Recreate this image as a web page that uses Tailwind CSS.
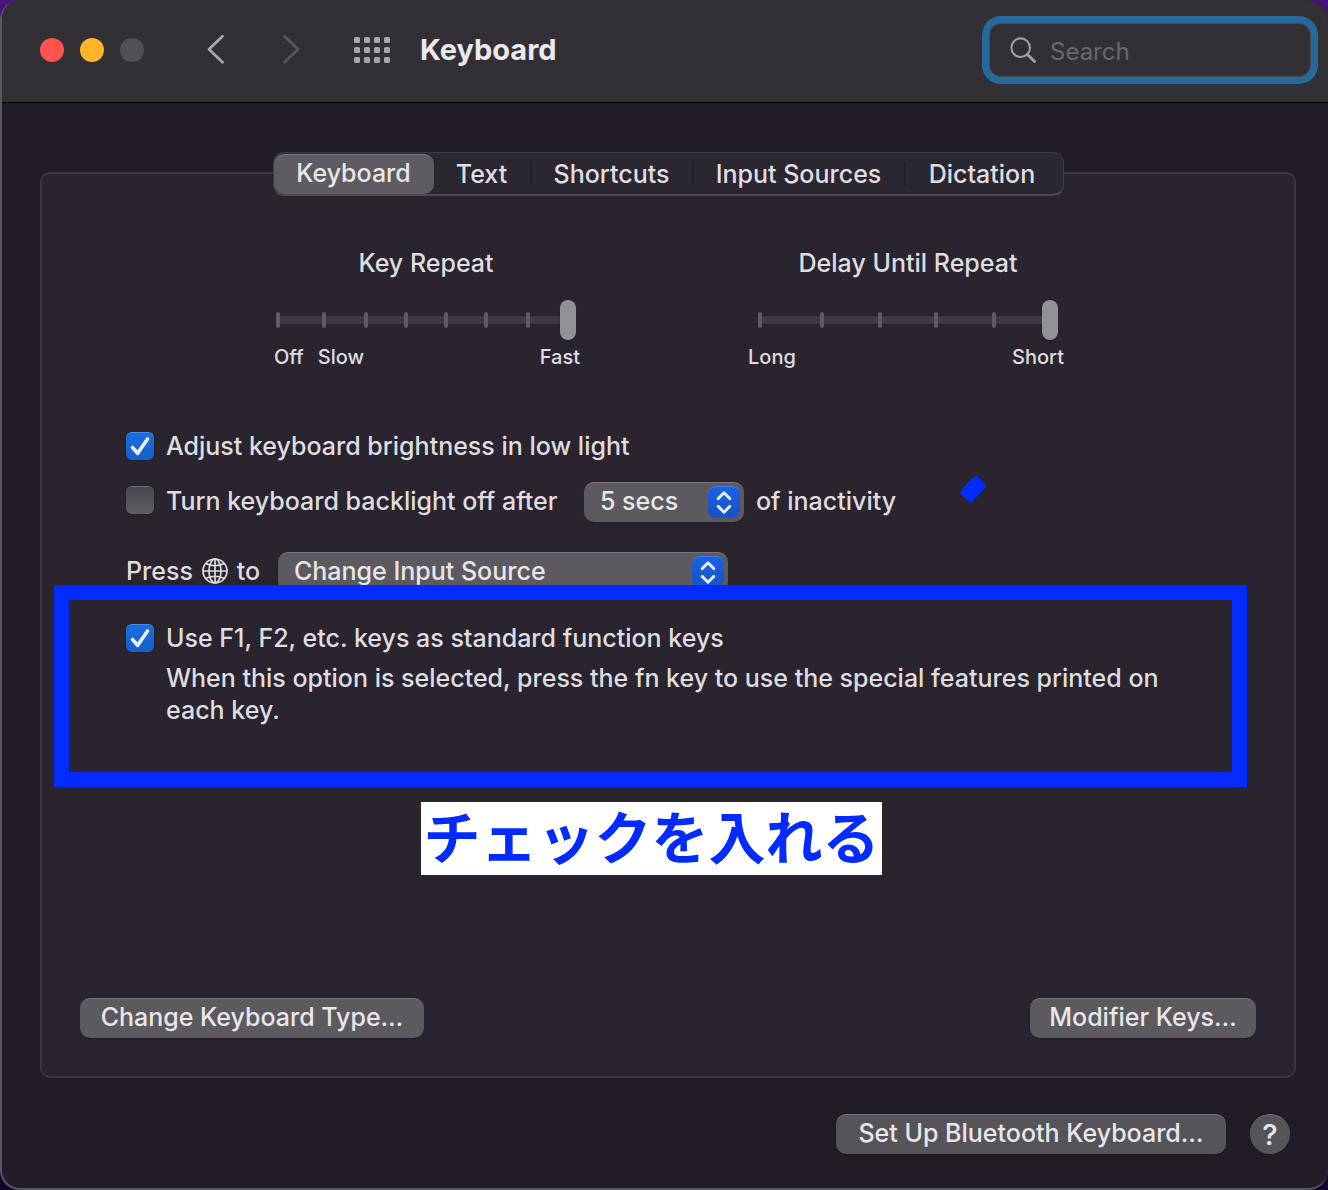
<!DOCTYPE html>
<html lang="en">
<head>
<meta charset="utf-8">
<meta name="viewport" content="width=device-width, initial-scale=1">
<title>Keyboard</title>
<script src="https://cdn.jsdelivr.net/npm/@tailwindcss/browser@4"></script>
</head>
<body class="min-h-screen bg-[linear-gradient(to_bottom,#4a1080,#1a0838_50%,#14062c)] font-['Inter','Noto_Sans_CJK_JP',sans-serif] text-[25px] font-medium leading-8 text-[#dfdde0]">
<div class="flex min-h-screen flex-col overflow-hidden rounded-[20px] border-b-2 border-l-2 border-[#59565c] bg-[#211c26]">

  <!-- Title bar -->
  <header class="flex h-[103px] items-center border-b border-black bg-[#323035] pb-0.5 pl-[38px] pr-[17px]">
    <div class="flex gap-4">
      <button aria-label="Close" class="size-6 rounded-full bg-[#ff544d]"></button>
      <button aria-label="Minimize" class="size-6 rounded-full bg-[#ffb429]"></button>
      <button aria-label="Zoom" disabled class="size-6 rounded-full bg-[#525056]"></button>
    </div>
    <nav class="ml-[58px] flex items-center gap-[46px]" aria-label="History">
      <button aria-label="Back"><svg class="size-7 overflow-visible" viewBox="0 0 28 28" fill="none" stroke="#a9a7ab" stroke-width="2.8" stroke-linecap="round" stroke-linejoin="round"><path d="M20.500 .300 7 13.300l13.500 13"/></svg></button>
      <button aria-label="Forward" disabled><svg class="size-7 overflow-visible" viewBox="0 0 28 28" fill="none" stroke="#57545a" stroke-width="2.8" stroke-linecap="round" stroke-linejoin="round"><path d="m8.500 .300 13.500 13-13.500 13"/></svg></button>
    </nav>
    <button aria-label="Show all" class="ml-[50px]">
      <svg class="h-[26px] w-9" viewBox="0 0 36 26" fill="#a8a6aa">
        <g id="dots"><rect width="6" height="6" rx="1.5"/><rect x="10" width="6" height="6" rx="1.5"/><rect x="20" width="6" height="6" rx="1.5"/><rect x="30" width="6" height="6" rx="1.5"/></g>
        <use href="#dots" y="10"/><use href="#dots" y="20"/>
      </svg>
    </button>
    <h1 class="ml-[30px] text-[29px] font-bold text-[#eae9eb]">Keyboard</h1>
    <label class="ml-auto flex h-[54px] w-[322px] items-center gap-3.5 rounded-xl border border-[#4b4950] bg-[#323035] pl-5 ring-[7px] ring-[#26699c]">
      <svg class="size-[26px] shrink-0" viewBox="0 0 28 28" fill="none" stroke="#a19fa3" stroke-width="2.2" stroke-linecap="round"><circle cx="11.500" cy="11.500" r="10"/><path d="m19 19 7.500 7.500" stroke-width="3"/></svg>
      <input type="search" aria-label="Search" placeholder="Search" class="w-full min-w-0 bg-transparent pt-1 text-[24px] font-normal outline-none placeholder:text-[#69666c]">
    </label>
  </header>

  <main class="flex flex-1 flex-col pb-[34px] pl-[38px] pr-8 pt-[69px]">
    <section class="relative flex flex-1 flex-col rounded-[10px] border-2 border-[#3a3740] bg-[#29242e]">

      <!-- Tabs sit across the pane's top edge -->
      <div role="tablist" class="-mt-[22px] flex h-11 items-center self-center rounded-[11px] border border-b-2 border-[#403c45] border-b-[#4c4851] bg-[#2b2730] text-[#e0dee1]">
        <button role="tab" aria-selected="true" class="h-10 w-40 rounded-[10px] border-t border-[#79767c] bg-[#5e5b61] pb-0.5 text-[#e8e7e9]">Keyboard</button>
        <button role="tab" class="h-6 w-[98px] border-r-2 border-[#242029] leading-[22px]">Text</button>
        <button role="tab" class="h-6 w-[162px] border-r-2 border-[#242029] leading-[22px]">Shortcuts</button>
        <button role="tab" class="h-6 w-[212px] border-r-2 border-[#242029] leading-[22px]">Input Sources</button>
        <button role="tab" class="h-6 w-[157px] pr-1 leading-[22px]">Dictation</button>
      </div>

      <!-- Repeat sliders -->
      <div class="mt-[51px] flex justify-center gap-[182px] pr-0.5">
        <div class="flex w-[300px] flex-col">
          <label for="rate" class="text-center">Key Repeat</label>
          <div class="mt-[21px] grid h-10 items-center">
            <div class="col-start-1 row-start-1 h-2 rounded-full bg-[#3c3942]"></div>
            <svg class="col-start-1 row-start-1 h-4 w-full" viewBox="0 0 300 16" stroke="#5e5b62" stroke-width="4" stroke-linecap="round"><path d="M2 2v12M48 2v12M90 2v12M130 2v12M170 2v12M210 2v12M252 2v12"/></svg>
            <input id="rate" type="range" min="0" max="7" value="7" class="col-start-1 row-start-1 h-10 w-full appearance-none bg-transparent [&::-webkit-slider-thumb]:h-10 [&::-webkit-slider-thumb]:w-4 [&::-webkit-slider-thumb]:appearance-none [&::-webkit-slider-thumb]:rounded-full [&::-webkit-slider-thumb]:bg-[#949196] [&::-webkit-slider-thumb]:shadow">
          </div>
          <div class="-mx-1 mt-[5px] flex gap-3.5 pl-0.5 text-[20px] leading-6"><span>Off</span><span>Slow</span><span class="ml-auto">Fast</span></div>
        </div>
        <div class="flex w-[300px] flex-col">
          <label for="delay" class="text-center">Delay Until Repeat</label>
          <div class="mt-[21px] grid h-10 items-center">
            <div class="col-start-1 row-start-1 h-2 rounded-full bg-[#3c3942]"></div>
            <svg class="col-start-1 row-start-1 h-4 w-full" viewBox="0 0 300 16" stroke="#5e5b62" stroke-width="4" stroke-linecap="round"><path d="M2 2v12M64 2v12M122 2v12M178 2v12M236 2v12"/></svg>
            <input id="delay" type="range" min="0" max="5" value="5" class="col-start-1 row-start-1 h-10 w-full appearance-none bg-transparent [&::-webkit-slider-thumb]:h-10 [&::-webkit-slider-thumb]:w-4 [&::-webkit-slider-thumb]:appearance-none [&::-webkit-slider-thumb]:rounded-full [&::-webkit-slider-thumb]:bg-[#949196] [&::-webkit-slider-thumb]:shadow">
          </div>
          <div class="-ml-3 -mr-2 mt-[5px] flex justify-between px-0.5 text-[20px] leading-6"><span>Long</span><span>Short</span></div>
        </div>
      </div>

      <!-- Options -->
      <div class="mt-[61px] flex flex-col px-[84px]">
        <div class="flex items-center gap-3">
          <span class="grid size-7 shrink-0">
            <input id="bright" type="checkbox" checked class="peer col-start-1 row-start-1 size-7 appearance-none rounded-md border-t border-[#6c696f] bg-linear-to-b from-[#4a474d] to-[#5f5c62] shadow checked:border-[#4b8ce8] checked:from-[#1b6de0] checked:to-[#155fc6]">
            <svg class="pointer-events-none invisible col-start-1 row-start-1 size-7 peer-checked:visible" viewBox="0 0 28 28" fill="none" stroke="#e9f0fb" stroke-width="3.600" stroke-linecap="round" stroke-linejoin="round"><path d="m6.500 15.500 5.200 5.800L21.500 7"/></svg>
          </span>
          <label for="bright">Adjust keyboard brightness in low light</label>
        </div>

        <div class="mt-5 flex items-center">
          <span class="mb-1 mr-3 grid size-7 shrink-0">
            <input id="backlight" type="checkbox" class="peer col-start-1 row-start-1 size-7 appearance-none rounded-md border-t border-[#6c696f] bg-linear-to-b from-[#4a474d] to-[#5f5c62] shadow checked:border-[#4b8ce8] checked:from-[#1b6de0] checked:to-[#155fc6]">
            <svg class="pointer-events-none invisible col-start-1 row-start-1 size-7 peer-checked:visible" viewBox="0 0 28 28" fill="none" stroke="#e9f0fb" stroke-width="3.600" stroke-linecap="round" stroke-linejoin="round"><path d="m6.500 15.500 5.200 5.800L21.500 7"/></svg>
          </span>
          <label for="backlight" class="w-[418px] pb-0.5">Turn keyboard backlight off after</label>
          <span class="grid items-center">
            <select aria-label="Backlight timeout" class="col-start-1 row-start-1 h-10 w-40 appearance-none rounded-[10px] border-t border-[#79767c] bg-[#5c595f] pb-1 pl-4 text-[#e8e7e9] shadow"><option>5 secs</option></select>
            <svg class="pointer-events-none col-start-1 row-start-1 mr-1 size-8 justify-self-end rounded-lg border-t border-[#3f7de8] bg-linear-to-b from-[#1a62e3] to-[#1553c6]" viewBox="0 0 32 32" fill="none" stroke="#e6edfa" stroke-width="3" stroke-linecap="round" stroke-linejoin="round"><path d="m10 12 6-6 6 6M10 20l6 6 6-6"/></svg>
          </span>
          <span class="ml-3 pb-0.5">of inactivity</span>
        </div>

        <div class="mt-[30px] flex items-center">
          <label for="globe" class="flex w-[152px] items-center gap-[9px] pb-0.5">Press
            <svg class="size-[26px]" viewBox="0 0 26 26" fill="none" stroke="#dfdde0" stroke-width="1.700"><circle cx="13" cy="13" r="12"/><ellipse cx="13" cy="13" rx="6" ry="12"/><path d="M13 1v24M1 13h24M3.800 5.500q9.200 4.500 18.400 0M3.800 20.500q9.200-4.500 18.400 0"/></svg>
            to</label>
          <span class="grid items-center">
            <select id="globe" class="col-start-1 row-start-1 h-10 w-[450px] appearance-none rounded-[10px] border-t border-[#79767c] bg-[#5c595f] pb-1 pl-4 text-[#e8e7e9] shadow"><option>Change Input Source</option></select>
            <svg class="pointer-events-none col-start-1 row-start-1 mr-1 size-8 justify-self-end rounded-lg border-t border-[#3f7de8] bg-linear-to-b from-[#1a62e3] to-[#1553c6]" viewBox="0 0 32 32" fill="none" stroke="#e6edfa" stroke-width="3" stroke-linecap="round" stroke-linejoin="round"><path d="m10 12 6-6 6 6M10 20l6 6 6-6"/></svg>
          </span>
        </div>

        <div class="mt-[30px] flex items-center gap-3">
          <span class="grid size-7 shrink-0">
            <input id="fkeys" type="checkbox" checked aria-describedby="fkeys-note" class="peer col-start-1 row-start-1 size-7 appearance-none rounded-md border-t border-[#6c696f] bg-linear-to-b from-[#4a474d] to-[#5f5c62] shadow checked:border-[#4b8ce8] checked:from-[#1b6de0] checked:to-[#155fc6]">
            <svg class="pointer-events-none invisible col-start-1 row-start-1 size-7 peer-checked:visible" viewBox="0 0 28 28" fill="none" stroke="#e9f0fb" stroke-width="3.600" stroke-linecap="round" stroke-linejoin="round"><path d="m6.500 15.500 5.200 5.800L21.500 7"/></svg>
          </span>
          <label for="fkeys">Use F1, F2, etc. keys as standard function keys</label>
        </div>
        <p id="fkeys-note" class="ml-10 mt-2">When this option is selected, press the fn key to use the special features printed on each key.</p>
      </div>

      <div class="mt-auto flex justify-between px-[38px] pb-[38px]">
        <button class="h-10 w-[344px] rounded-[10px] border-t border-[#79767c] bg-[#5c595f] pb-1 text-[#e8e7e9] shadow">Change Keyboard Type…</button>
        <button class="h-10 w-[226px] rounded-[10px] border-t border-[#79767c] bg-[#5c595f] pb-1 text-[#e8e7e9] shadow">Modifier Keys…</button>
      </div>

      <!-- Annotations drawn over the pane -->
      <div class="pointer-events-none absolute left-3 right-[47px] top-[411px] h-[202px] border-[15px] border-[#032bff]"></div>
      <p class="absolute left-[379px] top-[628px] flex h-[73px] w-[461px] items-center justify-center whitespace-nowrap bg-white pb-2 font-['Noto_Sans_CJK_JP',sans-serif] text-[57px] font-bold leading-none text-[#032bff]" lang="ja">チェックを入れる</p>
      <svg class="absolute left-[917px] top-[301px] h-7 w-7" viewBox="0 0 28 28" fill="#032bff"><path d="M17.300.4 27.500 11 12 28 .500 18Q8 7 17.300.4Z"/></svg>
    </section>

    <footer class="mt-9 flex justify-end gap-6 pr-1.5">
      <button class="h-10 w-[390px] rounded-[10px] border-t border-[#737076] bg-[#575459] pb-1 text-[#e8e7e9] shadow">Set Up Bluetooth Keyboard…</button>
      <button aria-label="Help" class="size-10 rounded-full border-t border-[#737076] bg-[#575459] text-[29px] text-[#e8e7e9] shadow">?</button>
    </footer>
  </main>
</div>
</body>
</html>
